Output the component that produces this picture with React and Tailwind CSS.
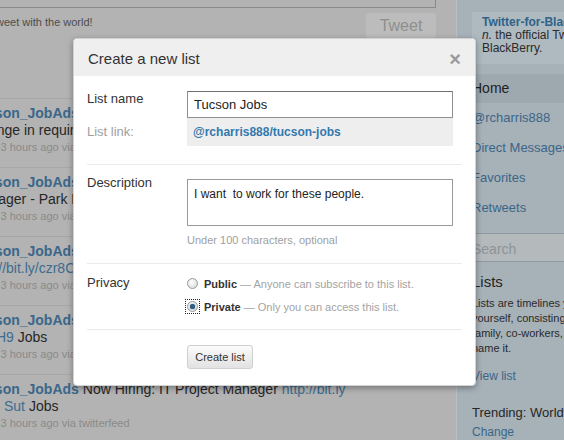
import React from 'react';

const tweets = [
  { line1: ' Now Hiring: Technical Project Manager -', line2: [{ t: 'Change in requirements for the position' }] },
  { line1: ' Now Hiring: Customer Service', line2: [{ t: 'Manager - Park Place Mall' }] },
  { line1: ' Now Hiring: Sales Associate', line2: [{ t: 'http://bit.ly/czr8Cq', link: true }] },
  { line1: ' Now Hiring: Network Engineer http://bit.ly/', line2: [{ t: 'aXuH9', link: true }, { t: ' Jobs' }] },
  { line1: ' Now Hiring: IT Project Manager ', url: 'http://bit.ly', indent: true, line2: [{ t: 'Sut', link: true }, { t: ' Jobs' }] },
];

const navItems = ['@rcharris888', 'Direct Messages', 'Favorites', 'Retweets'];

const Radio = ({ checked }) => (
  <span
    className={
      checked
        ? 'flex items-center justify-center border border-dotted border-[#222] p-[1px]'
        : 'flex items-center justify-center border border-transparent p-[1px]'
    }
  >
    <span className="flex items-center justify-center w-[11px] h-[11px] rounded-full border border-[#9a9a9a] bg-[radial-gradient(circle_at_40%_35%,#ffffff,#d4d4d4)]">
      {checked && <span className="w-[5px] h-[5px] rounded-full bg-[#2e5f85] shadow-[0_0_1px_#16364f]" />}
    </span>
  </span>
);

const App = () => {
  return (
    <div className="relative w-[564px] h-[440px] overflow-hidden flex bg-[#b3b3b3] font-['Liberation_Sans',Arial,sans-serif]">
      {/* dimmed timeline column */}
      <main className="w-[456px] shrink-0">
        <div className="w-[436px] h-[8px] border-b border-r border-[#8a8a8a]" />
        <div className="w-[436px] flex justify-between items-start mt-[5px]">
          <span className="-ml-[7px] mt-[2px] text-[11px] leading-[14px] text-[#4d4d4d] whitespace-nowrap">
            tweet with the world!
          </span>
          <span className="w-[70px] h-[25px] flex items-center justify-center rounded-[3px] bg-[#bcbcbc] text-[16px] text-[#8e8e8e]">
            Tweet
          </span>
        </div>

        <ul className="mt-[60px] border-t border-[#a7a7a7]">
          {tweets.map((tw, i) => (
            <li key={i} className="pt-[6px] pb-[12px] border-b border-[#a7a7a7] -ml-[29px] whitespace-nowrap">
              <p className="text-[14px] leading-[17px] text-[#262626]">
                <b className="text-[#3a678a]">Tucson_JobAds</b>
                {tw.line1}
                {tw.url && <span className="text-[#3e6c8f]">{tw.url}</span>}
              </p>
              <p className={tw.indent ? 'pl-[33px] text-[14px] leading-[17px] text-[#262626]' : 'text-[14px] leading-[17px] text-[#262626]'}>
                {tw.line2.map((s, j) => (
                  <span key={j} className={s.link ? 'text-[#3e6c8f]' : ''}>
                    {s.t}
                  </span>
                ))}
              </p>
              <p className="-ml-[1px] text-[11px] leading-[16px] text-[#8a8a8a]">about 3 hours ago via twitterfeed</p>
            </li>
          ))}
        </ul>
      </main>

      {/* dimmed sidebar */}
      <aside className="flex-1 bg-[#a7b1b8] border-l border-[#b9bfc3] whitespace-nowrap">
        <div className="mt-[12px] ml-[15px] pt-[4px] pb-[9px] pl-[10px] bg-[#aeb9c0] text-[12px] leading-[13px]">
          <p className="font-bold text-[#2f6388]">Twitter-for-BlackBerry</p>
          <p className="text-[#2a2a2a]">
            <i>n.</i> the official Twitter app for
          </p>
          <p className="text-[#2a2a2a]">BlackBerry.</p>
        </div>

        <div className="mt-[10px] h-[29px] flex items-center pl-[15px] bg-[#9da8af] text-[14px] text-[#1f1f1f]">
          Home
        </div>
        <ul>
          {navItems.map((n) => (
            <li key={n} className="h-[30px] flex items-center pl-[15px] text-[13px] text-[#3b6688]">
              {n}
            </li>
          ))}
        </ul>
        <div className="mt-[10px] h-[29px] flex items-center pl-[15px] pt-[3px] bg-[#b4b9bc] border-y border-[#8f999f] text-[14px] text-[#8d9499]">
          Search
        </div>

        <div className="pl-[15px]">
          <h3 className="mt-[11px] text-[15px] leading-[18px] text-[#262626]">Lists</h3>
          <p className="mt-[5px] w-[220px] text-[11px] leading-[15px] text-[#2a2a2a]">
            Lists are timelines you build
            <br />
            yourself, consisting of friends,
            <br />
            family, co-workers, sports teams,
            <br />
            name it.
          </p>
          <p className="mt-[13px] text-[12px] leading-[15px] text-[#3b6688]">View list</p>
          <h3 className="mt-[20px] text-[13px] leading-[18px] text-[#262626]">Trending: Worldwide</h3>
          <p className="mt-[3px] text-[12px] leading-[15px] text-[#3b6688]">Change</p>
        </div>
      </aside>

      {/* modal */}
      <div className="absolute left-[73px] top-[38px] w-[403px] bg-white border border-[#d2d2d2] rounded-[4px] shadow-[0_2px_6px_rgba(0,0,0,0.35)] overflow-hidden">
        <div className="h-[37px] pt-[3px] px-[14px] flex items-center justify-between bg-[#efefef]">
          <h2 className="text-[15px] text-[#333]">Create a new list</h2>
          <span className="text-[20px] leading-none text-[#9a9a9a] font-bold">×</span>
        </div>

        <div className="px-[13px] text-[13px] leading-[16px]">
          {/* name */}
          <div className="pt-[15px] flex">
            <label className="w-[100px] text-[#333]">List name</label>
            <div className="w-[266px] h-[27px] flex items-center px-[6px] border border-[#8f8f8f] border-t-[#6f6f6f] text-[#222]">
              Tucson Jobs
            </div>
          </div>
          <div className="flex items-center">
            <label className="w-[100px] text-[#a0a0a0]">List link:</label>
            <div className="w-[266px] h-[28px] flex items-center px-[6px] bg-[#eeeeee] text-[12px] font-bold text-[#3479ad]">
              @rcharris888/tucson-jobs
            </div>
          </div>

          <hr className="mt-[18px] border-[#ebebeb]" />

          {/* description */}
          <div className="pt-[10px] flex">
            <label className="w-[100px] text-[#333]">Description</label>
            <div>
              <div className="mt-[4px] w-[266px] h-[47px] px-[6px] pt-[6px] border border-[#9a9a9a] text-[12px] text-[#222] whitespace-pre">
                I want  to work for these people.
              </div>
              <p className="mt-[7px] text-[11px] leading-[14px] text-[#a0a0a0]">Under 100 characters, optional</p>
            </div>
          </div>

          <hr className="mt-[16px] border-[#ebebeb]" />

          {/* privacy */}
          <div className="pt-[8px] flex">
            <label className="w-[100px] pt-[3px] text-[#333]">Privacy</label>
            <div className="text-[11px]">
              <div className="h-[23px] flex items-center gap-[4px] -ml-[2px]">
                <Radio />
                <span>
                  <b className="text-[#333]">Public</b>
                  <span className="text-[#a3a3a3]"> — Anyone can subscribe to this list.</span>
                </span>
              </div>
              <div className="h-[23px] flex items-center gap-[4px] -ml-[2px]">
                <Radio checked />
                <span>
                  <b className="text-[#333]">Private</b>
                  <span className="text-[#a3a3a3]"> — Only you can access this list.</span>
                </span>
              </div>
            </div>
          </div>

          <hr className="mt-[11px] border-[#ebebeb]" />

          <div className="pt-[15px] pb-[16px] pl-[100px]">
            <button className="w-[66px] h-[24px] rounded-[3px] border border-[#cfcfcf] bg-gradient-to-b from-[#fbfbfb] to-[#e2e2e2] text-[11px] text-[#333]">
              Create list
            </button>
          </div>
        </div>
      </div>
    </div>
  );
};

export default App;
